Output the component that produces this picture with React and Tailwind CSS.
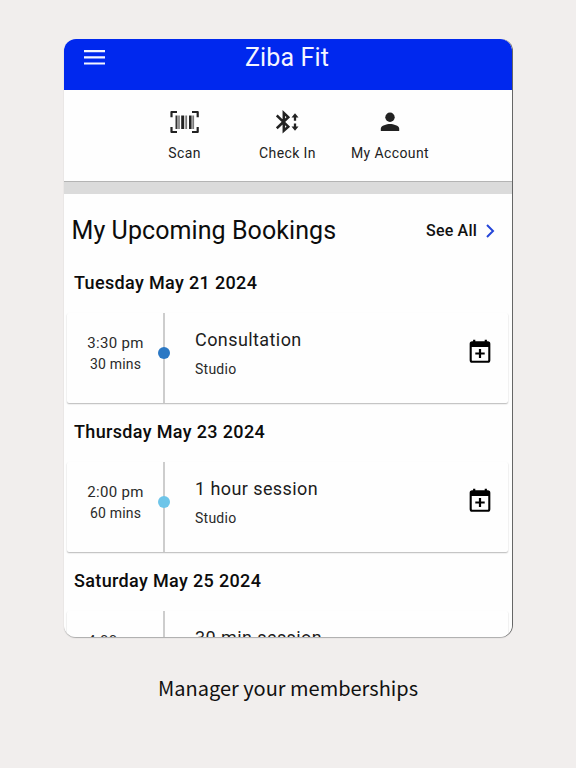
import React from 'react';

function MenuIcon() {
  return (
    <svg width="21" height="15" viewBox="0 0 21 15" fill="#f4f5ff">
      <path d="M0 0h21v2.2H0zM0 6.2h21v2.2H0zM0 12.4h21v2.2H0z" />
    </svg>
  );
}

function ScanIcon() {
  return (
    <svg width="30" height="24" viewBox="0 0 30 24" fill="none" stroke="#222">
      <path strokeWidth="2.2" strokeLinejoin="round" d="M1.500 7.200V2h5.500M22 2h5.700v5.200M27.700 17v5H22M7 22H1.500v-5" />
      <path strokeWidth="2" stroke="#333" d="M6.500 5.500v13.500" />
      <path strokeWidth="1.800" stroke="#888" d="M9 5.500v13.500" />
      <path strokeWidth="3" d="M12.700 5.500v13.500" />
      <path strokeWidth="1.800" stroke="#777" d="M16.200 5.500v13.500" />
      <path strokeWidth="2.600" d="M20.300 5.500v13.500" />
      <path strokeWidth="1.800" stroke="#777" d="M23.200 5.500v13.500" />
    </svg>
  );
}

function CheckInIcon() {
  return (
    <svg width="24" height="24" viewBox="0 0 24 24" fill="none" stroke="#222" strokeWidth="2.500">
      <path d="M.8 5.500 12.300 16.600 7.800 20.700V3l4.500 4.200L.8 18.300" strokeLinejoin="miter" />
      <path strokeWidth="2.300" d="M19 6v4.800M19 13.500v4.500" />
      <path fill="#222" stroke="none" d="M19 3.300l3.500 4.200h-7zM19 20.700l3.500-4.200h-7z" />
    </svg>
  );
}

function AccountIcon() {
  return (
    <svg width="20" height="20" viewBox="0 0 20 20" fill="#222">
      <circle cx="10" cy="5.200" r="4.700" />
      <path d="M.8 19v-2.300c0-3.200 6-4.700 9.200-4.700s9.200 1.500 9.200 4.700V19z" />
    </svg>
  );
}

function CalendarPlusIcon() {
  return (
    <svg width="22" height="24" viewBox="0 0 22 24" fill="none" stroke="#000">
      <rect x="1.700" y="3.300" width="18.600" height="19.400" rx="1.500" strokeWidth="2.100" />
      <path d="M1.500 3h19v5h-19z" fill="#000" stroke="none" />
      <path strokeWidth="2.200" d="M5.200.8v4M16.800.8v4" />
      <path strokeWidth="2.200" d="M11 10v9M6.300 14.500h9.400" />
    </svg>
  );
}

function Action({ icon, label, className }) {
  return (
    <div className={`flex flex-col items-center ${className}`}>
      <div className="flex h-6 items-center justify-center">{icon}</div>
      <span className="mt-[9px] text-sm leading-5 tracking-[0.4px] whitespace-nowrap text-[#222]">{label}</span>
    </div>
  );
}

function Booking({ date, time, length, title, place, dot }) {
  return (
    <section className="h-[149px] shrink-0">
      <h2 className="pl-2.5 text-lg leading-[37px] font-medium tracking-[0.35px] text-[#0c0c0c]">{date}</h2>
      <div className="mr-1 ml-[3px] mt-3 flex h-[90px] rounded-[2px] shadow-[0_1px_1.500px_rgba(0,0,0,0.28)]">
        <div className="w-24 pt-[20px] pl-[1px] text-center whitespace-nowrap text-[#2a2a2a]">
          <p className="text-[15px] leading-[21px] tracking-[0.3px]">{time}</p>
          {length && <p className="text-sm leading-[21px] tracking-[0.2px]">{length}</p>}
        </div>
        <div className="relative w-0.5 bg-[#cdcdcd]">
          <span className="absolute top-[33.500px] left-[-5px] size-3 rounded-full" style={{ background: dot }} />
        </div>
        <div className="flex-1 pt-[15px] pl-[30px] whitespace-nowrap">
          <h3 className="text-lg leading-6 tracking-[0.42px] text-[#1c1c1c]">{title}</h3>
          {place && <p className="mt-[7px] text-sm leading-5 tracking-[0.25px] text-[#2a2a2a]">{place}</p>}
        </div>
        {dot && (
          <div className="pt-[26px] pr-[17px]">
            <CalendarPlusIcon />
          </div>
        )}
      </div>
    </section>
  );
}

const bookings = [
  { date: 'Tuesday May 21 2024', time: '3:30 pm', length: '30 mins', title: 'Consultation', place: 'Studio', dot: '#2b78c4' },
  { date: 'Thursday May 23 2024', time: '2:00 pm', length: '60 mins', title: '1 hour session', place: 'Studio', dot: '#6ec5e9' },
  { date: 'Saturday May 25 2024', time: '4:00 pm', title: '30 min session' },
];

export default function App() {
  return (
    <div className="flex h-[768px] w-[576px] flex-col items-center overflow-hidden bg-[#f1eeed] pt-[39px] font-[Roboto,sans-serif]">
      <div className="rounded-xl shadow-[1px_0_0.500px_#666,0_1px_1px_#aaa]">
        <main className="flex h-[598px] w-[448px] flex-col overflow-hidden rounded-xl bg-[#fefefe]">
          <header className="grid h-[51px] shrink-0 grid-cols-[1fr_auto_1fr] bg-[#0028ee] pl-5">
            <div className="pt-[11px]">
              <MenuIcon />
            </div>
            <h1 className="-ml-[22px] pt-px text-[25px] leading-9 tracking-[0.15px] text-[#f4f5ff]">Ziba Fit</h1>
          </header>
          <nav className="flex h-[91px] shrink-0 pt-5 pl-[104px]">
            <Action icon={<ScanIcon />} label="Scan" className="w-[33px]" />
            <Action icon={<CheckInIcon />} label="Check In" className="ml-[58px] w-[57px]" />
            <Action icon={<AccountIcon />} label="My Account" className="ml-[35px] w-[78px]" />
          </nav>
          <div className="h-[13px] shrink-0 border-t border-[#b4b4b4] bg-[#dbdbdb]" />
          <div className="flex h-[70px] shrink-0 items-center justify-between pt-1 pr-[17px] pl-[7.500px]">
            <h2 className="text-[25px] leading-8 tracking-[0.08px] text-[#0c0c0c]">My Upcoming Bookings</h2>
            <div className="flex items-center gap-[9px] text-base leading-5 font-medium tracking-[0.2px] text-[#111]">
              See All
              <svg width="9" height="14" viewBox="0 0 9 14" fill="none" stroke="#2546d8" strokeWidth="2">
                <path d="M1 1 7 7l-6 6" />
              </svg>
            </div>
          </div>
          {bookings.map((b) => (
            <Booking key={b.date} {...b} />
          ))}
        </main>
      </div>
      <p className="mt-[36px] font-['Noto_Sans_CJK_SC','Noto_Sans',sans-serif] text-[20px] leading-[30px] text-[#111]">Manager your memberships</p>
    </div>
  );
}
